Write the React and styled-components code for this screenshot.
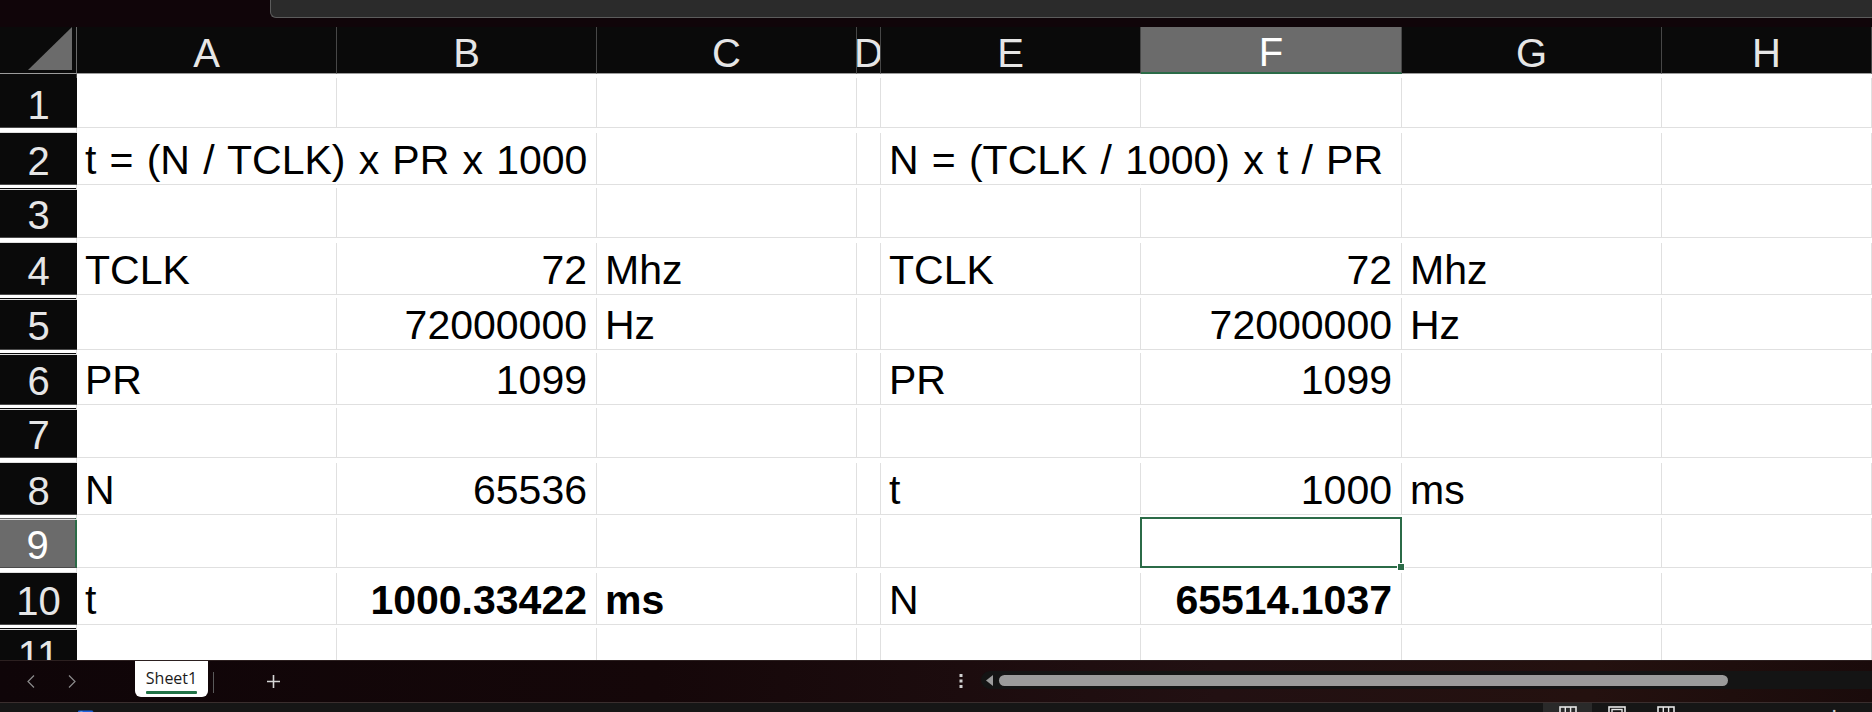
import React from "react";
import styled, { createGlobalStyle, css } from "styled-components";

const Global = createGlobalStyle`
  html, body { margin: 0; padding: 0; background: #100509; }
  body { font-family: "Liberation Sans", Arial, sans-serif; }
`;

const COLS = "77px 260px 260px 260px 24px 260px 261px 260px 1fr";
const GREEN = "#2b6b47";

const Page = styled.div`
  width: 1872px;
  height: 712px;
  display: flex;
  flex-direction: column;
  overflow: hidden;
  background: #100509;
`;

const TopStrip = styled.div`
  height: 27px;
  flex: none;
  padding-left: 270px;
  box-sizing: border-box;
  background: #100509;
`;

const FormulaBox = styled.div`
  height: 18px;
  box-sizing: border-box;
  background: #2b2b2b;
  border-left: 1px solid #5c5c5c;
  border-bottom: 1px solid #5c5c5c;
  border-bottom-left-radius: 6px;
`;

const Sheet = styled.div`
  flex: 1;
  min-height: 0;
  overflow: hidden;
  background: #ffffff;
  display: flex;
  flex-direction: column;
`;

const Row = styled.div`
  display: grid;
  grid-template-columns: ${COLS};
  height: ${(p) => (p.$head ? "51px" : "55px")};
  flex: none;
`;

const Corner = styled.div`
  background: #0a0a0a;
  border-right: 1px solid #6a6a6a;
  border-bottom: 1px solid #9c9c9c;
  box-sizing: border-box;
  display: flex;
  align-items: flex-end;
  justify-content: flex-end;
  padding: 0 4px 3px 0;
`;

const ColHead = styled.div`
  background: ${(p) => (p.$active ? "#6b6b6b" : "#0a0a0a")};
  color: ${(p) => (p.$active ? "#ffffff" : "#e6e6e6")};
  border-right: 1px solid #474747;
  border-bottom: ${(p) => (p.$active ? `2px solid ${GREEN}` : "1px solid #9c9c9c")};
  box-sizing: border-box;
  display: flex;
  align-items: center;
  justify-content: center;
  overflow: hidden;
  font-family: "Liberation Sans", Arial, sans-serif;
  font-size: 40px;
  padding-top: 6px;
  white-space: nowrap;
`;

const RowHead = styled.div`
  background: ${(p) => (p.$active ? "#6b6b6b" : "#0a0a0a")};
  color: ${(p) => (p.$active ? "#ffffff" : "#e6e6e6")};
  border-bottom: 1px solid #4a4a4a;
  border-right: ${(p) => (p.$active ? `2px solid ${GREEN}` : "0")};
  box-sizing: border-box;
  display: flex;
  align-items: center;
  justify-content: center;
  font-family: "Liberation Sans", Arial, sans-serif;
  font-size: 40px;
  padding-top: 6px;
  overflow: hidden;
`;

const Cell = styled.div`
  position: relative;
  box-sizing: border-box;
  border-right: 1px solid ${(p) => (p.$spill ? "transparent" : "#e0e0e0")};
  border-bottom: 1px solid #e0e0e0;
  display: flex;
  align-items: center;
  justify-content: ${(p) => (p.$right ? "flex-end" : "flex-start")};
  padding: 4px 9px 0 8px;
  white-space: nowrap;
  word-spacing: 1.8px;
  font-family: "Liberation Sans", Arial, sans-serif;
  font-size: 41px;
  font-weight: ${(p) => (p.$bold ? 700 : 400)};
  color: #000;
  ${(p) =>
    p.$selected &&
    css`
      &::after {
        content: "";
        position: absolute;
        left: -1px;
        top: -1px;
        right: -1px;
        bottom: -1px;
        border: 2px solid ${GREEN};
      }
      &::before {
        content: "";
        position: absolute;
        right: -4px;
        bottom: -4px;
        width: 6px;
        height: 6px;
        background: ${GREEN};
        border: 1px solid #fff;
        z-index: 2;
      }
    `}
`;

const TabBar = styled.div`
  height: 42px;
  flex: none;
  display: flex;
  align-items: flex-start;
  background: linear-gradient(90deg, #0f0508 0%, #150709 35%, #221012 65%, #24110f 85%, #1a0b0b 100%);
  border-top: 1px solid #2c2020;
  box-sizing: border-box;
`;

const NavButton = styled.div`
  width: 41px;
  height: 40px;
  display: flex;
  align-items: center;
  justify-content: center;
  margin-left: ${(p) => p.$ml || 0}px;
`;

const Tab = styled.div`
  margin-left: 43px;
  width: 73px;
  height: 36px;
  background: #ffffff;
  border-radius: 0 0 6px 6px;
  display: flex;
  flex-direction: column;
  align-items: center;
  justify-content: flex-end;
  box-sizing: border-box;
  padding-bottom: 3px;
  font-family: "Open Sans", "Noto Sans", sans-serif;
  font-size: 16px;
  color: #1b1b1b;
  line-height: 22px;
`;

const TabUnderline = styled.div`
  width: 51px;
  height: 3px;
  background: #217346;
  border-radius: 1px;
  margin-top: 2px;
`;

const TabDivider = styled.div`
  width: 1px;
  height: 21px;
  margin: 11px 0 0 5px;
  background: #5a5a5a;
`;

const AddButton = styled.div`
  margin: 0 0 0 52px;
  height: 40px;
  display: flex;
  align-items: center;
`;

const Dots = styled.div`
  margin-left: 678px;
  height: 40px;
  display: flex;
  align-items: center;
`;

const Track = styled.div`
  margin: 10px 0 0 18px;
  flex: 1;
  height: 18px;
  background: #141414;
  border-radius: 9px 0 0 9px;
  display: flex;
  align-items: center;
  padding-left: 5px;
`;

const Thumb = styled.div`
  margin-left: 6px;
  width: 729px;
  height: 11px;
  background: #9b9b9b;
  border-radius: 6px;
`;

const StatusBar = styled.div`
  height: 10px;
  flex: none;
  background: #161616;
  border-top: 1px solid #3a2e2e;
  box-sizing: border-box;
  overflow: hidden;
  display: flex;
  align-items: flex-start;
  font-family: "Open Sans", "Noto Sans", sans-serif;
  font-size: 14px;
  color: #cfcfcf;
`;

const StatusLeft = styled.div`
  display: flex;
  align-items: flex-start;
  flex: 1;
`;

const StatusRight = styled.div`
  display: flex;
  align-items: flex-start;
  width: 329px;
  flex: none;
`;

const StatusText = styled.span`
  margin-left: ${(p) => p.$ml}px;
  margin-top: 6px;
  line-height: 18px;
  white-space: nowrap;
`;

const ViewButton = styled.div`
  width: 49px;
  height: 20px;
  background: ${(p) => (p.$active ? "#2a2a2a" : "transparent")};
  display: flex;
  justify-content: center;
  padding-top: 3px;
  box-sizing: border-box;
`;

const Chevron = ({ dir }) => (
  <svg width="8" height="13" viewBox="0 0 8 13">
    <path
      d={dir === "left" ? "M7 0.5 L1 6.5 L7 12.5" : "M1 0.5 L7 6.5 L1 12.5"}
      fill="none"
      stroke="#8c8c8c"
      strokeWidth="1.2"
    />
  </svg>
);

const GridIcon = ({ variant }) => (
  <svg width="18" height="16" viewBox="0 0 18 16">
    <rect x="1" y="1" width="16" height="14" fill="none" stroke="#e6e6e6" strokeWidth="1.6" />
    {variant === "page" ? (
      <rect x="4" y="3.5" width="10" height="5" fill="none" stroke="#e6e6e6" strokeWidth="1.4" />
    ) : (
      <>
        <line x1="6.3" y1="1" x2="6.3" y2="15" stroke="#e6e6e6" strokeWidth="1.4" />
        <line x1="11.6" y1="1" x2="11.6" y2="15" stroke="#e6e6e6" strokeWidth="1.4" />
      </>
    )}
  </svg>
);

const cols = ["A", "B", "C", "D", "E", "F", "G", "H", ""];

const data = {
  2: { A: { t: "t = (N / TCLK) x PR x 1000", spill: true }, E: { t: "N = (TCLK / 1000) x t / PR", spill: true } },
  4: { A: { t: "TCLK" }, B: { t: "72", r: true }, C: { t: "Mhz" }, E: { t: "TCLK" }, F: { t: "72", r: true }, G: { t: "Mhz" } },
  5: { B: { t: "72000000", r: true }, C: { t: "Hz" }, F: { t: "72000000", r: true }, G: { t: "Hz" } },
  6: { A: { t: "PR" }, B: { t: "1099", r: true }, E: { t: "PR" }, F: { t: "1099", r: true } },
  8: { A: { t: "N" }, B: { t: "65536", r: true }, E: { t: "t" }, F: { t: "1000", r: true }, G: { t: "ms" } },
  10: {
    A: { t: "t" },
    B: { t: "1000.33422", r: true, b: true },
    C: { t: "ms", b: true },
    E: { t: "N" },
    F: { t: "65514.1037", r: true, b: true },
  },
};

export default function App() {
  const rows = Array.from({ length: 11 }, (_, i) => i + 1);
  return (
    <Page>
      <Global />
      <TopStrip>
        <FormulaBox />
      </TopStrip>
      <Sheet>
        <Row $head>
          <Corner>
            <svg width="44" height="43" viewBox="0 0 44 43">
              <polygon points="44,0 44,43 0,43" fill="#6b6b6b" />
            </svg>
          </Corner>
          {cols.map((c, i) => (
            <ColHead key={i} $active={c === "F"}>
              {c}
            </ColHead>
          ))}
        </Row>
        {rows.map((r) => (
          <Row key={r}>
            <RowHead $active={r === 9}>{r}</RowHead>
            {cols.map((c, i) => {
              const d = (data[r] || {})[c];
              return (
                <Cell
                  key={i}
                  $right={d?.r}
                  $bold={d?.b}
                  $spill={d?.spill}
                  $selected={r === 9 && c === "F"}
                >
                  {d?.t}
                </Cell>
              );
            })}
          </Row>
        ))}
      </Sheet>
      <TabBar>
        <NavButton $ml={10}>
          <Chevron dir="left" />
        </NavButton>
        <NavButton>
          <Chevron dir="right" />
        </NavButton>
        <Tab>
          <span>Sheet1</span>
          <TabUnderline />
        </Tab>
        <TabDivider />
        <AddButton>
          <svg width="15" height="15" viewBox="0 0 15 15">
            <path d="M7.5 1 V14 M1 7.5 H14" stroke="#d6d6d6" strokeWidth="1.6" />
          </svg>
        </AddButton>
        <Dots>
          <svg width="4" height="14" viewBox="0 0 4 14">
            <rect x="0.5" y="0" width="3" height="3" fill="#d0d0d0" />
            <rect x="0.5" y="5.5" width="3" height="3" fill="#d0d0d0" />
            <rect x="0.5" y="11" width="3" height="3" fill="#d0d0d0" />
          </svg>
        </Dots>
        <Track>
          <svg width="7" height="11" viewBox="0 0 7 11">
            <polygon points="7,0 7,11 0,5.5" fill="#9b9b9b" />
          </svg>
          <Thumb />
        </Track>
      </TabBar>
      <StatusBar>
        <StatusLeft>
          <StatusText $ml={17}>Ready</StatusText>
          <StatusText $ml={20}>♿</StatusText>
          <StatusText $ml={18}>Accessibility: Good to go</StatusText>
        </StatusLeft>
        <StatusRight>
          <ViewButton $active>
            <GridIcon variant="normal" />
          </ViewButton>
          <ViewButton>
            <GridIcon variant="page" />
          </ViewButton>
          <ViewButton>
            <GridIcon variant="normal" />
          </ViewButton>
          <StatusText $ml={115}>— &nbsp; ┃</StatusText>
        </StatusRight>
      </StatusBar>
    </Page>
  );
}
